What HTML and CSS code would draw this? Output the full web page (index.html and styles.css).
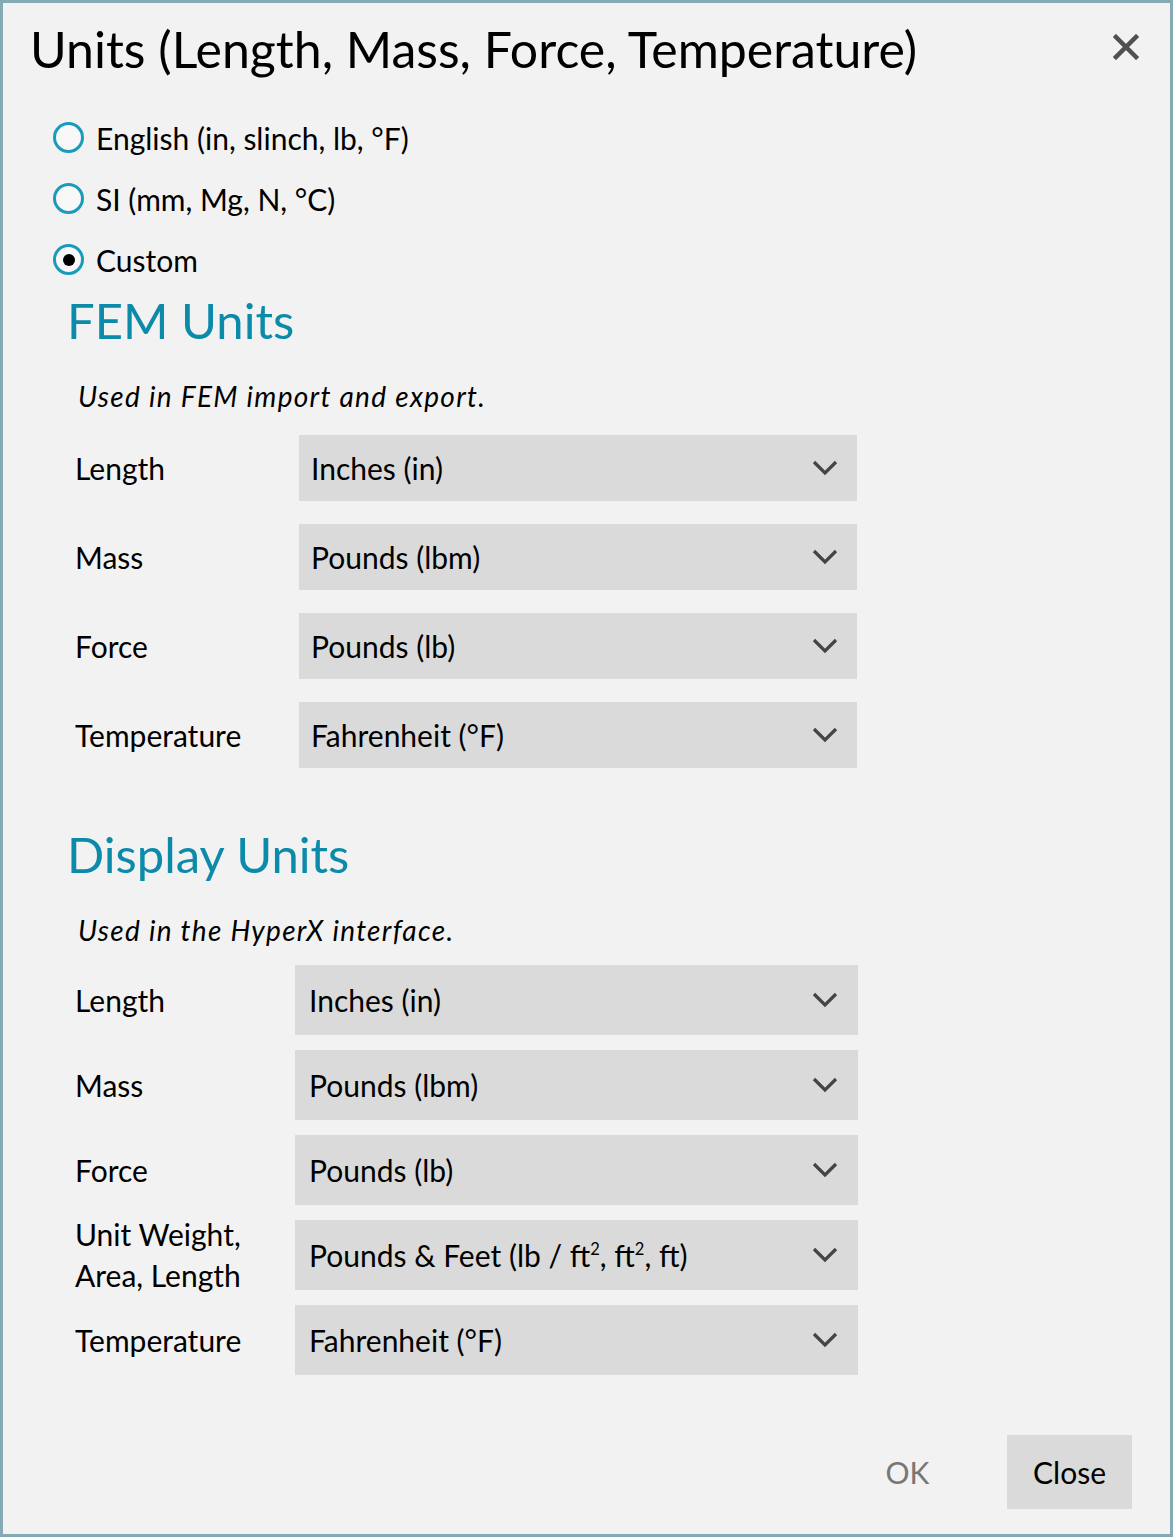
FILE: index.html
```html
<!DOCTYPE html>
<html lang="en">
<head>
  <meta charset="UTF-8" />
  <title>Units</title>
  <meta name="viewport" content="width=device-width, initial-scale=1.0" />
  <link rel="stylesheet" href="styles.css">
</head>
<body>
  <div class="dialog">
    <header class="title-bar">
      <h1>Units (Length, Mass, Force, Temperature)</h1>
      <button class="close-btn" aria-label="Close">
        <svg width="26" height="26" viewBox="0 0 26 26">
          <path d="M3 3 L23 23 M23 3 L3 23" stroke="#505050" stroke-width="4.5" stroke-linecap="square" fill="none" />
        </svg>
      </button>
    </header>

    <div class="presets">
      <label class="radio"><span class="dot"></span>English (in, slinch, lb, °F)</label>
      <label class="radio"><span class="dot"></span>SI (mm, Mg, N, °C)</label>
      <label class="radio checked"><span class="dot"></span>Custom</label>
    </div>

    <section class="group">
      <h2>FEM Units</h2>
      <p class="note">Used in FEM import and export.</p>
      <div class="fields fem">
        <span class="field-label">Length</span>
        <div class="dropdown"><span>Inches (in)</span></div>
        <span class="field-label">Mass</span>
        <div class="dropdown"><span>Pounds (lbm)</span></div>
        <span class="field-label">Force</span>
        <div class="dropdown"><span>Pounds (lb)</span></div>
        <span class="field-label">Temperature</span>
        <div class="dropdown"><span>Fahrenheit (°F)</span></div>
      </div>
    </section>

    <section class="group display">
      <h2>Display Units</h2>
      <p class="note">Used in the HyperX interface.</p>
      <div class="fields disp">
        <span class="field-label">Length</span>
        <div class="dropdown"><span>Inches (in)</span></div>
        <span class="field-label">Mass</span>
        <div class="dropdown"><span>Pounds (lbm)</span></div>
        <span class="field-label">Force</span>
        <div class="dropdown"><span>Pounds (lb)</span></div>
        <span class="field-label">Unit Weight,<br>Area, Length</span>
        <div class="dropdown"><span>Pounds &amp; Feet (lb / ft<sup>2</sup>, ft<sup>2</sup>, ft)</span></div>
        <span class="field-label">Temperature</span>
        <div class="dropdown"><span>Fahrenheit (°F)</span></div>
      </div>
    </section>

    <footer class="actions">
      <button class="btn" disabled>OK</button>
      <button class="btn primary">Close</button>
    </footer>
  </div>

  <script>
    // every dropdown gets the same chevron on its right side
    document.querySelectorAll(".dropdown").forEach(dd => {
      dd.insertAdjacentHTML("beforeend",
        '<svg class="chevron" width="26" height="16" viewBox="0 0 26 16">' +
        '<polyline points="2,2 13,13 24,2" stroke="#444" stroke-width="3.2" fill="none" /></svg>');
    });
  </script>
</body>
</html>
```

FILE: styles.css
```css
:root {
  --bg: #f2f2f2;
  --box: #dadada;
  --text: #000;
  --accent: #0b8aa9;
  --radio: #1a9bbb;
  --border: #86aab5;
}

* {
  box-sizing: border-box;
}

html, body {
  margin: 0;
  background: var(--bg);
}

body {
  font-family: "Lato", "Noto Sans", sans-serif;
  color: var(--text);
}

.dialog {
  width: 1173px;
  height: 1537px;
  border: 3px solid var(--border);
  padding: 16px 24px 25px 27px;
  display: flex;
  flex-direction: column;
}

.title-bar {
  display: flex;
  justify-content: space-between;
  align-items: center;
}

h1 {
  font-size: 50px;
  font-weight: 400;
  line-height: 60px;
  margin: 0;
}

.close-btn {
  width: 40px;
  height: 40px;
  border: none;
  background: none;
  padding: 0;
  display: flex;
  align-items: center;
  justify-content: center;
  margin-top: -4px;
}

.presets {
  margin: 28px 0 0 23px;
}

.radio {
  display: flex;
  align-items: center;
  height: 61px;
  font-size: 30px;
}

.dot {
  width: 31px;
  height: 31px;
  border: 3.5px solid var(--radio);
  border-radius: 50%;
  background: #f8f8f8;
  margin-right: 12px;
  display: flex;
  align-items: center;
  justify-content: center;
}

.radio.checked .dot::after {
  content: "";
  width: 12px;
  height: 12px;
  border-radius: 50%;
  background: #000;
}

h2 {
  font-size: 49px;
  font-weight: 400;
  line-height: 60px;
  color: var(--accent);
  margin: 0 0 0 37px;
}

.note {
  font-size: 28px;
  font-style: italic;
  letter-spacing: 1.3px;
  line-height: 40px;
  margin: 26px 0 0 48px;
}

.fields {
  display: grid;
  align-items: center;
  margin-left: 45px;
}

.fields.fem {
  grid-template-columns: 224px 558px;
  grid-auto-rows: 66px;
  row-gap: 23px;
  margin-top: 19px;
}

.fields.disp {
  grid-template-columns: 220px 563px;
  grid-auto-rows: 70px;
  row-gap: 15px;
  margin-top: 15px;
}

.field-label {
  font-size: 30px;
  line-height: 41px;
}

.dropdown {
  height: 100%;
  background: var(--box);
  font-size: 30px;
  display: flex;
  align-items: center;
  justify-content: space-between;
  padding: 0 19px 0 12px;
}

.disp .dropdown {
  padding: 0 20px 0 14px;
}

.dropdown sup {
  font-size: 0.55em;
  line-height: 0;
  vertical-align: 0.75em;
}

.group.display {
  margin-top: 56px;
}

.actions {
  margin-top: auto;
  display: flex;
  justify-content: flex-end;
  gap: 37px;
  padding-right: 14px;
}

.btn {
  width: 125px;
  height: 74px;
  border: none;
  background: none;
  font-family: inherit;
  font-size: 30px;
  color: var(--text);
  padding: 0;
}

.btn:disabled {
  color: #777;
}

.btn.primary {
  background: var(--box);
}
```
